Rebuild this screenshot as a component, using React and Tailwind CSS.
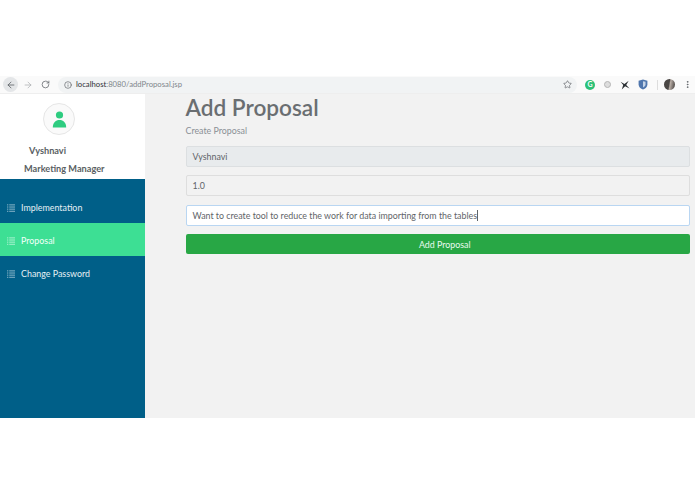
import { ArrowLeft, ArrowRight, RotateCw, Info, Star, MoreVertical } from 'lucide-react'

const menu = [
  { label: 'Implementation', active: false },
  { label: 'Proposal', active: true },
  { label: 'Change Password', active: false },
]

function ListIcon() {
  return (
    <svg width="8" height="8" viewBox="0 0 9 9" className="shrink-0" aria-hidden="true">
      <g stroke="currentColor" strokeWidth="0.9" opacity="0.75">
        <path d="M0 1h1.5M2.5 1H9M0 3.4h1.5M2.5 3.4H9M0 5.8h1.5M2.5 5.8H9M0 8.2h1.5M2.5 8.2H9" />
      </g>
    </svg>
  )
}

function Toolbar() {
  return (
    <div className="flex h-[18px] items-center bg-[#fafafa] text-[#5f6368] border-b border-[#eeeeee]">
      <div className="ml-[3px] flex h-[15px] w-[15px] items-center justify-center rounded-full bg-[#e4e6e8]">
        <ArrowLeft size={10} strokeWidth={2} />
      </div>
      <ArrowRight size={10} strokeWidth={1.6} className="ml-[5px] text-[#a5a8ab]" />
      <RotateCw size={9} strokeWidth={2} className="ml-[8px]" />
      <div className="ml-[8px] flex h-[16px] w-[519px] items-center rounded-full bg-[#f1f3f4] pl-[6px] pr-[5px]">
        <Info size={8} strokeWidth={2} />
        <span className="ml-[4px] pt-px text-[7.7px] text-[#80868b]">
          <span className="text-[#303134]">localhost</span>:8080/addProposal.jsp
        </span>
        <Star size={9} strokeWidth={1.8} className="ml-auto" />
      </div>
      <div className="ml-[8px] flex h-[10px] w-[10px] items-center justify-center rounded-full bg-[#2cc178] text-[7px] font-bold text-white">G</div>
      <div className="ml-[9px] h-[7px] w-[7px] rounded-full border border-[#b5b5b5] bg-[#dddddd]" />
      <svg width="10" height="10" viewBox="0 0 9 9" className="ml-[9px]" aria-hidden="true">
        <path d="M0.5 1.5 L4 3.6 L7.8 0.6 L5.6 4.4 L8.6 7.6 L4.6 5.6 L1.6 8.6 L2.9 4.6 Z" fill="#2b2f33" />
      </svg>
      <svg width="10" height="11" viewBox="0 0 9 10" className="ml-[8px]" aria-hidden="true">
        <path d="M4.5 0.5 L8.5 1.6 V5 C8.5 7.4 6.5 9 4.5 9.6 C2.5 9 0.5 7.4 0.5 5 V1.6 Z" fill="#4f76ad" />
        <path d="M4.5 2 L6.8 2.6 V5 C6.8 6.2 5.6 7.2 4.5 7.7 Z" fill="#c6d4e6" />
      </svg>
      <div className="ml-[9px] h-[10px] w-px bg-[#dddddd]" />
      <div className="ml-[6px] h-[11px] w-[11px] rounded-full bg-[linear-gradient(100deg,#4a4644_45%,#b9aea6_55%,#3b3735)]" />
      <MoreVertical size={9} strokeWidth={2.4} className="ml-[8px]" />
    </div>
  )
}

function Sidebar() {
  return (
    <aside className="flex w-[144.5px] shrink-0 flex-col">
      <div className="flex h-[85px] flex-col bg-white text-[#5a5f63]">
        <div className="ml-[43px] mt-[9px] flex h-[32px] w-[32px] items-center justify-center rounded-full border border-[#e6e6e6] bg-[#fafafa]">
          <svg width="15" height="17" viewBox="0 0 15 17" aria-hidden="true">
            <circle cx="7.5" cy="4" r="3.6" fill="#2ecc80" />
            <path d="M0.8 16.5 C0.8 11.5 3.8 9 7.5 9 C11.2 9 14.2 11.5 14.2 16.5 Z" fill="#2ecc80" />
          </svg>
        </div>
        <p className="mt-[9px] pl-[29px] text-[9.2px] font-bold leading-[13px]">Vyshnavi</p>
        <p className="mt-[5px] pl-[24px] text-[9.2px] font-bold leading-[13px]">Marketing Manager</p>
      </div>
      <nav className="flex flex-1 flex-col bg-[#005f88] pt-[11px] text-[#e6f0f5]">
        {menu.map((item) => (
          <a
            key={item.label}
            href="#"
            className={`flex h-[33px] items-center gap-[6px] pl-[7px] pt-[2px] text-[8.9px] ${item.active ? 'bg-[#3ddf94] text-[#f3fff9]' : ''}`}
          >
            <ListIcon />
            {item.label}
          </a>
        ))}
      </nav>
    </aside>
  )
}

const fieldBase = 'flex h-[21px] items-center rounded-[2px] border px-[6px] text-[8.85px] text-[#5f6468]'

export default function App() {
  return (
    <div className="h-[494px] w-[695px] overflow-hidden bg-white font-['Lato','Open_Sans',sans-serif]">
      <div className="h-[76px]" />
      <Toolbar />
      <div className="flex h-[324px]">
        <Sidebar />
        <main className="flex-1 bg-[#f2f2f2] pl-[41px] pr-[5px]">
          <h1 className="text-[22.6px] font-semibold leading-[28px] text-[#6a6e71]">Add Proposal</h1>
          <p className="mt-[2px] text-[8.85px] leading-[13px] text-[#8a9095]">Create Proposal</p>
          <div className="mt-[9px] flex flex-col gap-[8.4px]">
            <div className={`${fieldBase} border-[#dcdfe1] bg-[#e8ebed]`}>Vyshnavi</div>
            <div className={`${fieldBase} border-[#dedede] bg-[#f2f2f2]`}>1.0</div>
            <div className={`${fieldBase} border-[#b9d6f2] bg-white`}>
              Want to create tool to reduce the work for data importing from the tables
              <span className="h-[11px] w-px bg-[#5f6468]" />
            </div>
            <button type="button" className="h-[20px] rounded-[2px] bg-[#28a745] pl-[14px] text-[8.85px] text-[#eafaf0]">Add Proposal</button>
          </div>
        </main>
      </div>
    </div>
  )
}
